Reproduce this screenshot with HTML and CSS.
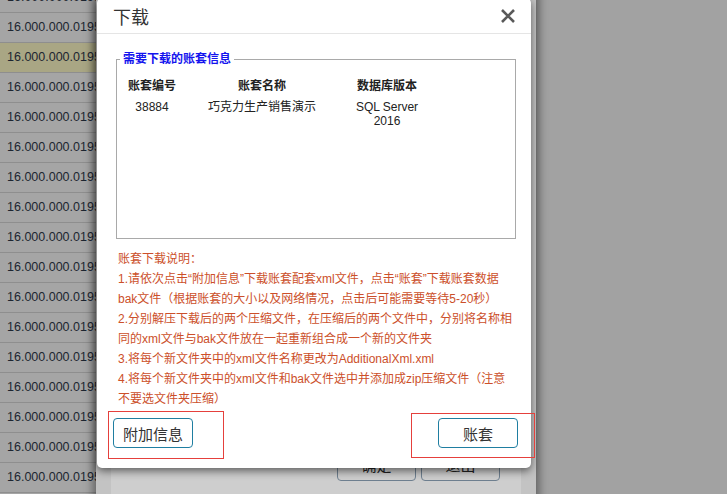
FILE: index.html
```html
<!DOCTYPE html>
<html lang="zh-CN">
<head>
<meta charset="utf-8">
<title>下载</title>
<link rel="stylesheet" href="styles.css">
</head>
<body>
<div class="screen">
  <div class="grid">
    <div class="row">16.000.000.0195</div>
    <div class="row">16.000.000.0195</div>
    <div class="row sel">16.000.000.0195</div>
    <div class="row">16.000.000.0195</div>
    <div class="row">16.000.000.0195</div>
    <div class="row">16.000.000.0195</div>
    <div class="row">16.000.000.0195</div>
    <div class="row">16.000.000.0195</div>
    <div class="row">16.000.000.0195</div>
    <div class="row">16.000.000.0195</div>
    <div class="row">16.000.000.0195</div>
    <div class="row">16.000.000.0195</div>
    <div class="row">16.000.000.0195</div>
    <div class="row">16.000.000.0195</div>
    <div class="row">16.000.000.0195</div>
    <div class="row">16.000.000.0195</div>
    <div class="row">16.000.000.0195</div>
    <div class="row">16.000.000.0195</div>
  </div>

  <div class="bgwin">
    <div class="bgpanel">
      <div class="bgbtns">
        <span class="bgbtn">确定</span>
        <span class="bgbtn">退出</span>
      </div>
    </div>
  </div>

  <div class="dialog">
    <div class="dlg-head">
      <span class="dlg-title">下载</span>
      <svg class="close" width="14" height="14" viewBox="0 0 14 14" aria-label="关闭">
        <path d="M1 1 L13 13 M13 1 L1 13" stroke="#595959" stroke-width="2.6" fill="none"/>
      </svg>
    </div>
    <div class="dlg-body">
      <fieldset class="info">
        <legend>需要下载的账套信息</legend>
        <div class="info-inner">
          <table class="acct">
            <colgroup><col class="c1"><col class="c2"><col class="c3"></colgroup>
            <thead>
              <tr><th>账套编号</th><th>账套名称</th><th>数据库版本</th></tr>
            </thead>
            <tbody>
              <tr><td>38884</td><td>巧克力生产销售演示</td><td>SQL Server 2016</td></tr>
            </tbody>
          </table>
        </div>
      </fieldset>
      <p class="notes">账套下载说明：<br>1.请依次点击“附加信息”下载账套配套xml文件，点击“账套”下载账套数据<br>bak文件（根据账套的大小以及网络情况，点击后可能需要等待5-20秒）<br>2.分别解压下载后的两个压缩文件，在压缩后的两个文件中，分别将名称相<br>同的xml文件与bak文件放在一起重新组合成一个新的文件夹<br>3.将每个新文件夹中的xml文件名称更改为AdditionalXml.xml<br>4.将每个新文件夹中的xml文件和bak文件选中并添加成zip压缩文件（注意<br>不要选文件夹压缩）</p>
    </div>
    <div class="dlg-foot">
      <button class="btn">附加信息</button>
      <button class="btn">账套</button>
    </div>
  </div>

  <div class="mark mark1"></div>
  <div class="mark mark2"></div>
</div>
</body>
</html>
```
FILE: styles.css
```css
html, body {
  margin: 0;
  padding: 0;
}
body {
  background: #a2a2a2;
  font-family: "Liberation Sans", "Noto Sans CJK SC", sans-serif;
  overflow: hidden;
}
.screen {
  position: relative;
  width: 727px;
  height: 494px;
  overflow: hidden;
}

/* background grid */
.grid {
  width: 120px;
  margin-top: -17px;
}
.row {
  height: 30px;
  box-sizing: border-box;
  border-bottom: 1px solid #8e8e8e;
  background: #a5a5a5;
  padding-left: 7px;
  font-size: 12.5px;
  line-height: 29px;
  color: #1c2530;
  white-space: nowrap;
}
.row.sel {
  background: #a9a684;
}

/* underlying window */
.bgwin {
  position: absolute;
  left: 96px;
  top: -10px;
  width: 440px;
  height: 520px;
  background: #c3c3c3;
  box-shadow: 0 0 9px 3px rgba(0, 0, 0, 0.42);
  display: flex;
  flex-direction: column;
  justify-content: flex-end;
  padding: 0 15px 0 15px;
  box-sizing: border-box;
}
.bgpanel {
  height: 70px;
  background: #cecece;
  padding: 11px 21px 0 0;
  box-sizing: border-box;
}
.bgbtns {
  display: flex;
  justify-content: flex-end;
  gap: 5px;
}
.bgbtn {
  width: 79px;
  height: 30px;
  box-sizing: border-box;
  border: 1px solid #6f8090;
  border-radius: 4px;
  font-size: 15px;
  line-height: 28px;
  text-align: center;
  color: #222;
}

/* dialog */
.dialog {
  position: absolute;
  left: 97px;
  top: -2px;
  width: 434px;
  height: 470px;
  background: #fff;
  border-radius: 5px;
  box-shadow: 0 3px 9px rgba(0, 0, 0, 0.55);
  display: flex;
  flex-direction: column;
}
.dlg-head {
  height: 36px;
  box-sizing: border-box;
  border-bottom: 1px solid #e5e5e5;
  padding: 0 16px;
  display: flex;
  align-items: center;
  justify-content: space-between;
}
.dlg-title {
  font-size: 18px;
  color: #333;
}
.close {
  display: block;
}
.dlg-body {
  padding: 0 15px 0 19px;
}
.info {
  margin: 17px 0 0;
  padding: 9px 8px 0 3px;
  border: 1px solid #a9a9a9;
  min-width: 0;
}
.info legend {
  padding: 0 3px;
  font-size: 12px;
  line-height: 16px;
  font-weight: bold;
  color: #1414ee;
}
.info-inner {
  height: 162px;
  margin-left: 5px;
}
.acct {
  border-collapse: collapse;
  table-layout: fixed;
  width: 304px;
  font-size: 12px;
  color: #222;
}
.acct col.c1 { width: 54px; }
.acct col.c2 { width: 166px; }
.acct col.c3 { width: 84px; }
.acct th {
  padding: 0;
  line-height: 20px;
  font-weight: bold;
  text-align: center;
}
.acct td {
  padding: 4px 0 0;
  line-height: 14px;
  text-align: center;
  vertical-align: top;
}
.notes {
  margin: 10px 0 0;
  padding-left: 2px;
  font-size: 12px;
  line-height: 20px;
  color: #cc4f2a;
  white-space: nowrap;
}
.dlg-foot {
  padding: 9px 13px 0 16px;
  display: flex;
  justify-content: space-between;
}
.btn {
  width: 80px;
  height: 30px;
  box-sizing: border-box;
  border: 1px solid #1f7ea1;
  border-radius: 4px;
  background: #fff;
  font-family: "Liberation Sans", "Noto Sans CJK SC", sans-serif;
  font-size: 15px;
  color: #333;
  padding: 0;
}

/* annotation boxes */
.mark {
  position: absolute;
  border: 1px solid #e5403c;
  box-sizing: border-box;
}
.mark1 {
  left: 108px;
  top: 411px;
  width: 116px;
  height: 48px;
}
.mark2 {
  left: 411px;
  top: 413px;
  width: 124px;
  height: 45px;
}
```
